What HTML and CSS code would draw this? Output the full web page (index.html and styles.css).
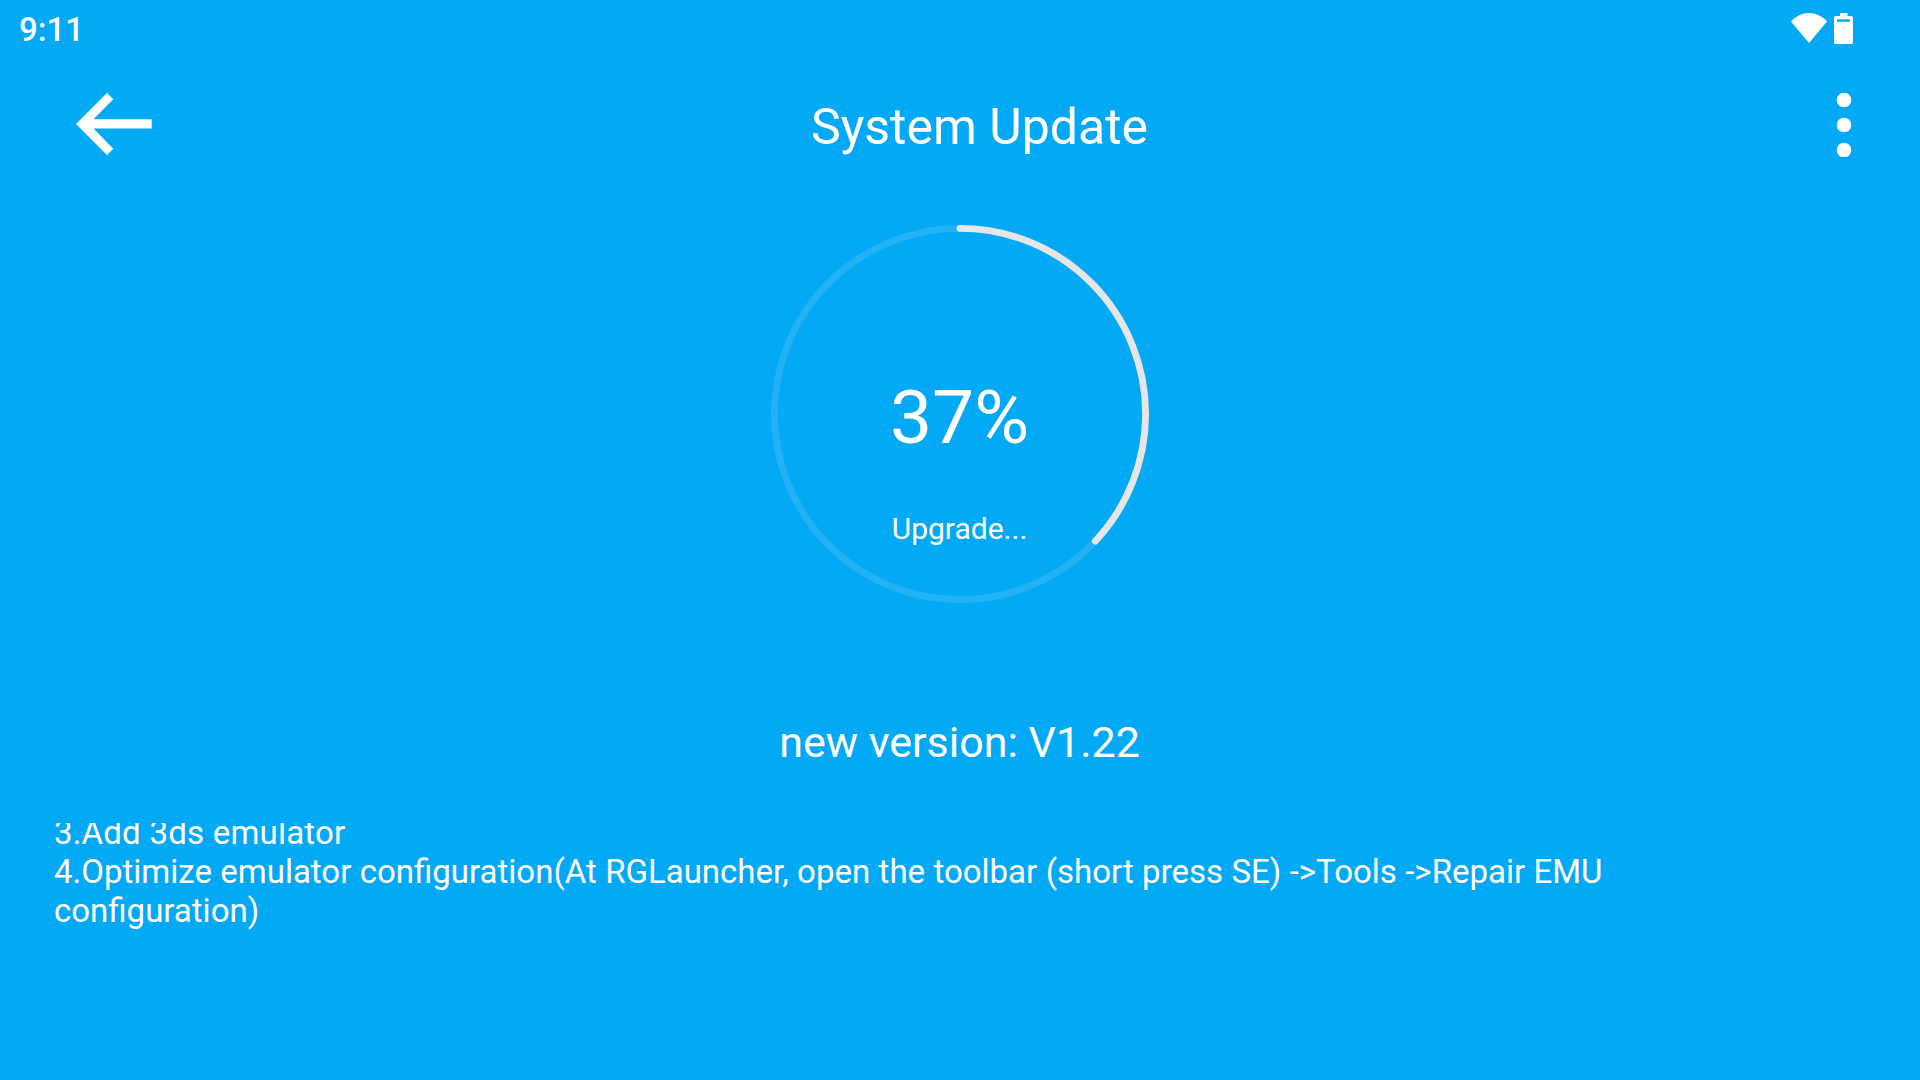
FILE: index.html
```html
<!DOCTYPE html>
<html lang="en">
<head>
    <meta charset="UTF-8">
    <meta name="viewport" content="width=device-width, initial-scale=1.0">
    <title>System Update</title>
    <link rel="stylesheet" href="styles.css">
</head>
<body>

<div class="status-bar">
    <span class="clock">9:11</span>
    <div class="status-icons">
        <svg class="wifi" viewBox="0 0 36 30" width="36" height="30">
            <path d="M0 8.500C5 3 11.200 0 18 0s13 3 18 8.500L18 30z"/>
        </svg>
        <svg class="battery" viewBox="0 0 19 31" width="19" height="31">
            <path fill-rule="evenodd" d="M6 0h7.500v3H17a2 2 0 0 1 2 2v24a2 2 0 0 1-2 2H2a2 2 0 0 1-2-2V5a2 2 0 0 1 2-2h4zM3 6.200v2.500h13V6.200z"/>
        </svg>
    </div>
</div>

<div class="header">
    <svg class="back" viewBox="0 0 76 62" width="76" height="62">
        <path d="M0 31L31 0l6.300 6.300L17.600 26.300H75.700v9.300H17.600L37.300 55.700 31 62z"/>
    </svg>
    <h1>System Update</h1>
    <svg class="menu" viewBox="0 0 16 64" width="16" height="64">
        <circle cx="8" cy="7" r="7.300"/>
        <circle cx="8" cy="32" r="7.300"/>
        <circle cx="8" cy="57" r="7.300"/>
    </svg>
</div>

<div class="progress">
    <svg class="ring" viewBox="0 0 378 378" width="378" height="378">
        <circle class="track" cx="189" cy="189" r="185.600"/>
        <circle class="bar" cx="189" cy="189" r="185.600" pathLength="100" transform="rotate(-90 189 189)"/>
    </svg>
    <div class="percent">37%</div>
    <div class="state">Upgrade...</div>
</div>

<div class="version">new version: V1.22</div>

<div class="notes">
    <div class="short">3.Add 3ds emulator</div>
    <div>4.Optimize emulator configuration(At RGLauncher, open the toolbar (short press SE) -&gt;Tools -&gt;Repair EMU configuration)</div>
</div>

</body>
</html>
```

FILE: styles.css
```css
body {
    font-family: Roboto, sans-serif;
    background-color: #03a9f4;
    color: #fff;
    margin: 0;
    height: 100vh;
    overflow: hidden;
}
svg {
    display: block;
    fill: #fff;
}
.status-bar {
    display: flex;
    justify-content: space-between;
    height: 56px;
    padding: 0 67px 0 19px;
}
.clock {
    font-size: 33px;
    font-weight: 500;
    line-height: 60px;
}
.status-icons {
    display: flex;
    gap: 7px;
    padding-top: 13px;
}
.header {
    display: flex;
    justify-content: space-between;
    height: 169px;
    padding: 37px 68px 0 76px;
    box-sizing: border-box;
}
h1 {
    margin: 0 29px 0 0;
    font-size: 50px;
    font-weight: 400;
    line-height: 68px;
}
.progress {
    display: grid;
    justify-items: center;
    width: 378px;
    height: 378px;
    margin: 0 auto;
    text-align: center;
}
.ring,
.percent,
.state {
    grid-area: 1 / 1;
}
.ring circle {
    fill: none;
    stroke-width: 6.8px;
}
.ring .track {
    stroke: #22b2f4;
}
.ring .bar {
    stroke: #e6e6e6;
    stroke-dasharray: 37 100;
    stroke-linecap: round;
}
.percent {
    padding: 148px 1px 0 0;
    font-size: 75px;
    line-height: 88px;
}
.state {
    padding: 286px 1px 0 0;
    font-size: 30px;
    line-height: 36px;
}
.version {
    margin-top: 114px;
    padding-right: 1px;
    font-size: 43px;
    line-height: 50px;
    text-align: center;
}
.notes {
    display: flex;
    flex-direction: column;
    justify-content: flex-end;
    height: 107px;
    margin: 56px 120px 0 54px;
    font-size: 33px;
    line-height: 39px;
    word-spacing: 0.2px;
    overflow: hidden;
}
.notes .short {
    letter-spacing: 0.18px;
}
```
